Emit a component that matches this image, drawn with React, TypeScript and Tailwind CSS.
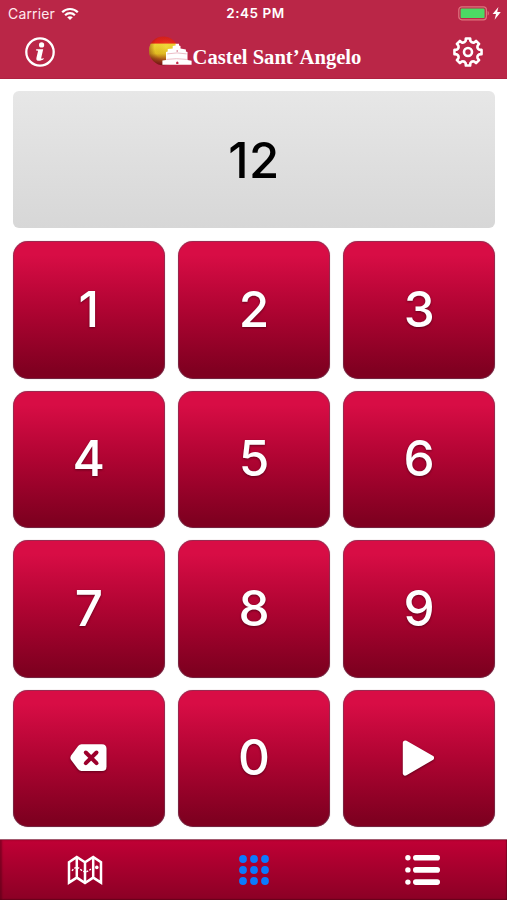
import React from "react";

const shadow = "drop-shadow-[0_1px_1px_rgba(50,0,15,0.6)]";

function gearPath(cx: number, cy: number) {
  let d = "";
  for (let i = 0; i < 8; i++) {
    const a = (i * Math.PI) / 4 - Math.PI / 2;
    const pt = (r: number, deg: number) => {
      const t = a + (deg * Math.PI) / 180;
      return `${(cx + r * Math.cos(t)).toFixed(2)} ${(cy + r * Math.sin(t)).toFixed(2)}`;
    };
    d += `${i === 0 ? "M" : "L"}${pt(13.7, -9)} L${pt(13.7, 9)} L${pt(11.4, 12)} Q${pt(9.6, 22.5)} ${pt(11.4, 33)} `;
  }
  return d + "Z";
}

function WifiIcon() {
  return (
    <svg width="18" height="14" viewBox="0 0 18 14" fill="none" stroke="#fff" strokeWidth="2.2">
      <path d="M1.2 5.3C5.4 .9 12.6 .9 16.8 5.3" />
      <path d="M4.1 8.2c2.7-2.7 7.1-2.7 9.8 0" />
      <path d="M9 13 6.2 10.2c1.6-1.4 4-1.4 5.6 0Z" fill="#fff" stroke="none" />
    </svg>
  );
}

function BatteryIcon() {
  return (
    <svg width="44" height="16" viewBox="0 0 44 16">
      <rect x="0.8" y="0.8" width="27.6" height="13" rx="3" fill="none" stroke="#dd747e" strokeWidth="1.2" />
      <rect x="2.6" y="2.5" width="24" height="9.6" rx="1.2" fill="#4cd964" />
      <path d="M29.6 5.1c1.6.5 1.6 4 0 4.5Z" fill="#dd747e" />
      <path d="M40.4 1 34.6 8.1h3.4l-1.4 5.6 6.2-7.6h-3.6Z" fill="#fff" />
    </svg>
  );
}

function InfoIcon() {
  return (
    <svg width="32" height="32" viewBox="0 0 32 32">
      <circle cx="16" cy="16" r="13.7" fill="none" stroke="#fff" strokeWidth="2.3" />
      <circle cx="17.6" cy="8.9" r="2.6" fill="#fff" />
      <path d="M12.2 13.2h7l-2 8.9c-.1.9 1 .7 2.6-.1l-.3 1.2c-3.1 2.2-8 2.2-7.1-1.3l1.6-6.6c0-.8-.8-.9-2-.8Z" fill="#fff" />
    </svg>
  );
}

function CastleLogo() {
  return (
    <svg width="44" height="32" viewBox="0 0 44 32">
      <defs>
        <linearGradient id="flag" x1="0" y1="0" x2="0" y2="1">
          <stop offset="0" stopColor="#d4201c" />
          <stop offset=".23" stopColor="#ee2519" />
          <stop offset=".27" stopColor="#f3dc35" />
          <stop offset=".6" stopColor="#e5c022" />
          <stop offset=".78" stopColor="#b0601a" />
          <stop offset="1" stopColor="#86131d" />
        </linearGradient>
        <radialGradient id="ball" cx=".6" cy=".38" r=".68">
          <stop offset="0" stopColor="#ffef71" stopOpacity=".15" />
          <stop offset=".6" stopColor="#5d0c0a" stopOpacity=".03" />
          <stop offset="1" stopColor="#66100c" stopOpacity=".55" />
        </radialGradient>
      </defs>
      <circle cx="14.4" cy="14.8" r="14.4" fill="url(#flag)" />
      <circle cx="14.4" cy="14.8" r="14.4" fill="url(#ball)" />
      <path d="M13.4 28.8v-4.3l3.6-.5v-8l1.7-.6v-2.3l5-.7v-2.3l2.9-.5v-1.8h3.4v1.8l1.5.4v2.4l5.4 1.2v2l1.6.5v8l4.1.6v4.1Z" fill="#fff" />
      <path d="M18.2 17.9q10-2 19.5 0M17.4 23.4q10-1.4 20.4 0" fill="none" stroke="#e3a0ad" strokeWidth=".7" />
      <path d="M27.2 28v-1.8q1.1-1.4 2.2 0V28Z" fill="#c22a49" />
      <circle cx="28.2" cy="15" r=".8" fill="#cf6177" />
    </svg>
  );
}

function GearIcon() {
  return (
    <svg width="32" height="32" viewBox="0 0 32 32" fill="none" stroke="#fff" strokeWidth="2.6" strokeLinejoin="round">
      <path d={gearPath(16, 16)} />
      <circle cx="16" cy="16" r="4" />
    </svg>
  );
}

function DeleteIcon() {
  return (
    <svg className={shadow} width="38" height="30" viewBox="0 0 38 30">
      <path d="M11.5 1.3H32Q36.5 1.3 36.5 5.8V23.4Q36.5 28 32 28H11.5Q9.6 28 8.1 26.2L1.1 17Q-.4 14.7 1.1 12.4L8.1 3.1Q9.6 1.3 11.5 1.3Z" fill="#fff" />
      <path d="m15.8 9.5 10.7 10.7m0-10.7L15.8 20.2" stroke="#9d002c" strokeWidth="4" strokeLinecap="round" />
    </svg>
  );
}

function PlayIcon() {
  return (
    <svg className={shadow} width="34" height="38" viewBox="0 0 34 38">
      <path d="M3.3 4 29.5 18.9 3.3 34.2Z" fill="#fff" stroke="#fff" strokeWidth="5" strokeLinejoin="round" />
    </svg>
  );
}

function MapIcon() {
  return (
    <svg width="36" height="31" viewBox="0 0 36 31" fill="none" stroke="#fff" strokeWidth="2.5" strokeLinejoin="miter">
      <path d="M2 7.2 9.8 1.9l8.2 5.3 8.2-5.3L34 7.2v20.4l-7.8-5-8.2 5.4-8.2-5.4-7.8 5ZM9.8 2v21M18 7.3v21M26.2 2v21" />
      <path d="M5 15.8q4-5.5 8.3-1.5t8 1.6l4.7-3" strokeWidth="1.4" strokeDasharray="2 1.3" />
      <circle cx="29.8" cy="12.4" r="1.8" fill="#fff" stroke="none" />
    </svg>
  );
}

function GridIcon() {
  return (
    <svg width="30" height="30" viewBox="0 0 30 30" fill="#0a7aff">
      {[4, 15, 26].map((y) => [4, 15, 26].map((x) => <circle key={`${x}-${y}`} cx={x} cy={y} r="3.9" />))}
    </svg>
  );
}

function ListIcon() {
  return (
    <svg width="36" height="32" viewBox="0 0 36 32" fill="#fff">
      {[3.7, 15.9, 28.1].map((y) => (
        <g key={y}>
          <circle cx="2.9" cy={y} r="2.7" />
          <rect x="8" y={y - 2.8} width="27" height="5.6" rx="2.8" />
        </g>
      ))}
    </svg>
  );
}

function Key({ children, label }: { children: React.ReactNode; label: string }) {
  return (
    <button
      aria-label={label}
      className="flex items-center justify-center rounded-[15px] bg-linear-to-b from-[#d80d45] from-10% via-[#af0432] via-50% to-[#7f0020] to-95% text-[49.5px] leading-none font-medium text-white shadow-[inset_0_0_0_1px_rgba(105,65,90,0.55),0_0_1px_rgba(120,20,50,0.5)]"
    >
      {children}
    </button>
  );
}

export default function App() {
  return (
    <div className="flex h-[900px] w-[507px] flex-col overflow-hidden bg-white font-['Inter','Liberation_Sans',sans-serif]">
      <header className="h-[79px] shrink-0 border-b border-[#b02141] bg-[#ba2647] text-white">
        <div className="grid h-[27px] grid-cols-3 items-center pr-[5px] pl-[8px] text-[13.5px]">
          <div className="flex items-center gap-[6px] text-[#ffe9ee]">
            <span className="text-[14px] tracking-[0.15px]">Carrier</span>
            <WifiIcon />
          </div>
          <span className="pl-px text-center font-semibold tracking-[0.55px]">2:45 PM</span>
          <div className="flex justify-end">
            <BatteryIcon />
          </div>
        </div>
        <div className="flex h-[50px] items-center justify-between pr-[23px] pl-[24px]">
          <InfoIcon />
          <div className="flex items-center pl-[2px]">
            <CastleLogo />
            <span className="mt-[9px] font-['Liberation_Serif',serif] text-[20.6px] leading-6 font-bold whitespace-nowrap">
              Castel Sant’Angelo
            </span>
          </div>
          <GearIcon />
        </div>
      </header>

      <main className="flex flex-1 flex-col gap-[13px] pt-[12px] pr-[12px] pb-[12px] pl-[13px]">
        <div className="flex h-[137px] shrink-0 items-center justify-center rounded-[6px] bg-linear-to-b from-[#e7e7e7] to-[#d7d7d7] pt-[2px] text-[49px] font-medium tracking-[0.5px] text-black">
          12
        </div>
        <div className="grid flex-1 grid-cols-3 grid-rows-4 gap-x-[13.5px] gap-y-[12px]">
          {["1", "2", "3", "4", "5", "6", "7", "8", "9"].map((n) => (
            <Key key={n} label={n}>
              <span className={`pb-px ${shadow}`}>{n}</span>
            </Key>
          ))}
          <Key label="Delete">
            <DeleteIcon />
          </Key>
          <Key label="0">
            <span className={`pb-px ${shadow}`}>0</span>
          </Key>
          <Key label="Play">
            <PlayIcon />
          </Key>
        </div>
      </main>

      <nav className="grid h-[61px] shrink-0 grid-cols-3 items-center justify-items-center border-t border-[#a35b70] bg-linear-to-b from-[#c00035] to-[#8b0025] shadow-[inset_2px_0_2px_rgba(80,0,20,0.5),inset_-1px_-1px_1px_rgba(80,0,20,0.5)]">
        <MapIcon />
        <GridIcon />
        <ListIcon />
      </nav>
    </div>
  );
}
